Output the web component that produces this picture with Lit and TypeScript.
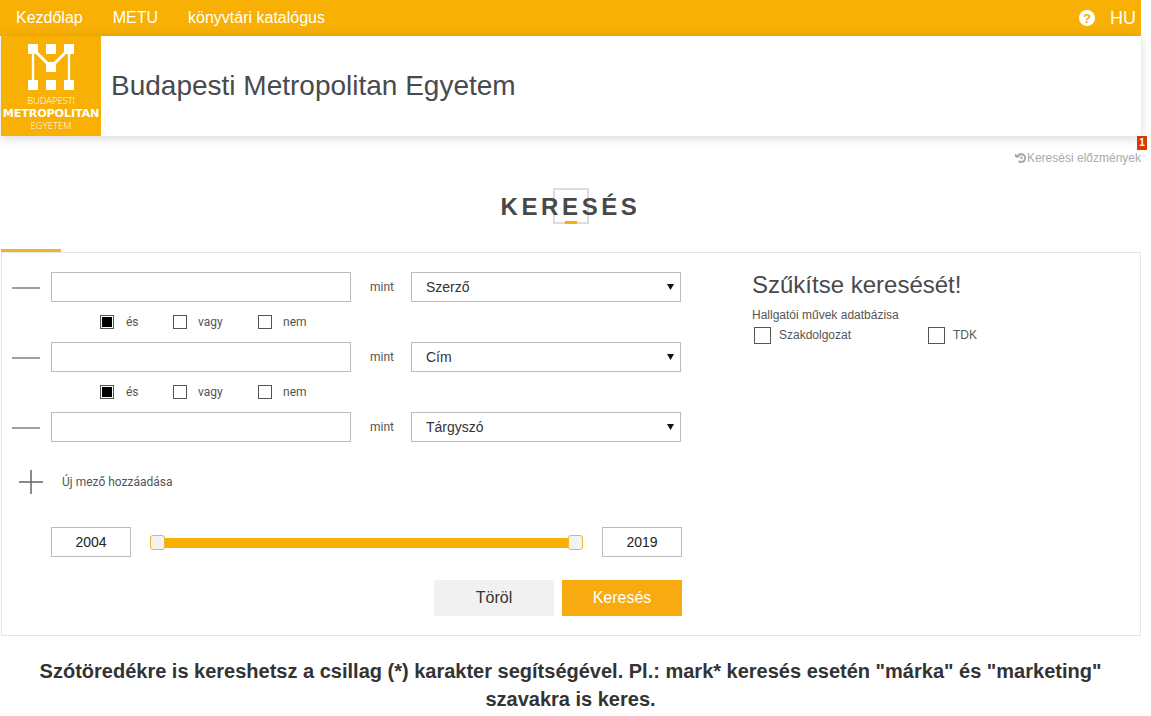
import { LitElement, html, css, svg } from "lit";
import { customElement } from "lit/decorators.js";

const logoMark = svg`<svg width="46" height="46" viewBox="0 0 46 46" class="mark">
  <g fill="#fff">
    <rect x="0" y="0" width="10" height="10"/><rect x="18" y="0" width="10" height="10"/><rect x="36" y="0" width="10" height="10"/>
    <rect x="18" y="18" width="10" height="10"/>
    <rect x="0" y="36" width="10" height="10"/><rect x="18" y="36" width="10" height="10"/><rect x="36" y="36" width="10" height="10"/>
  </g>
  <path d="M5 5V40M41 5V40" fill="none" stroke="#fff" stroke-width="2.4"/>
  <path d="M5 5 23 23 41 5" fill="none" stroke="#fff" stroke-width="3"/>
</svg>`;

@customElement("app-root")
export class AppRoot extends LitElement {
  static styles = css`
    :host { display: block; width: 1141px; background: #fff; font-family: "Liberation Sans", Arial, sans-serif; color: #444; }
    * { box-sizing: border-box; }
    .topbar { height: 36px; background: #f7b003; display: flex; align-items: center; color: #fff; font-size: 16px; padding: 0 5px 0 16px; }
    .topbar a { margin-right: 30px; }
    .spacer { flex: 1; }
    .help { width: 16px; height: 16px; border-radius: 50%; background: #fff; color: #f7b003; font-size: 13px; font-weight: 700; display: flex; align-items: center; justify-content: center; margin-right: 15px; }
    .lang { font-size: 18px; }
    .brand { height: 100px; margin-left: 1px; display: flex; align-items: center; box-shadow: 0 2px 10px rgba(0,0,0,.16); background: #fff; position: relative; }
    .logo { width: 100px; height: 100px; background: #f7b003; color: #fff; display: flex; flex-direction: column; align-items: center; padding-top: 8px; flex: none; }
    .logo .l1, .logo .l3 { font-size: 9.5px; line-height: 10px; font-family: "Open Sans", sans-serif; font-weight: 300; }
    .logo .l1 { margin-top: 6px; letter-spacing: -.1px; }
    .logo .l2 { font-size: 11.2px; line-height: 13px; font-weight: 700; font-family: "DejaVu Sans", sans-serif; letter-spacing: -.15px; margin-top: 1px; white-space: nowrap; }
    .logo .l3 { margin-top: 1px; }
    .brand h1 { font-size: 28px; font-weight: 400; margin: 0 0 0 10px; color: #484a4e; }
    .badge { position: absolute; right: -6px; bottom: -14px; width: 10px; height: 14px; background: #d83b01; color: #fff; font-size: 10px; font-weight: 700; text-align: center; line-height: 14px; }
    .history { display: flex; justify-content: flex-end; align-items: center; height: 14px; margin-top: 15px; font-size: 12px; color: #aaa; }
    .title-wrap { display: flex; justify-content: center; margin-top: 23px; height: 36px; }
    .title { position: relative; height: 36px; width: 140px; display: flex; align-items: center; justify-content: center; }
    .title .box { position: absolute; left: 52px; top: 0; width: 36px; height: 36px; border: 2px solid #ddd; }
    .title .bar { position: absolute; left: 64px; top: 33px; width: 12px; height: 3px; background: #f7b003; }
    .title h2 { position: relative; margin: 2px 0 0; font-size: 24px; font-weight: 700; letter-spacing: 3.6px; color: #48484a; white-space: nowrap; }
    .tab { width: 60px; height: 3px; margin: 25px 0 0 1px; background: #f0b429; }
    .panel { margin-left: 1px; height: 384px; border: 1px solid #e5e5e5; display: flex; padding: 19px 0 0 10px; }
    .form { width: 740px; flex: none; }
    .row { display: flex; align-items: center; height: 30px; }
    .dash { width: 28px; height: 2px; background: #a0a0a0; margin: 1px 11px 0 0; }
    input { font: 14px "Liberation Sans", Arial, sans-serif; color: #222; border: 1px solid #bbb; background: #fff; outline: none; border-radius: 0; }
    .text { width: 300px; height: 30px; }
    .mint { width: 60px; padding-left: 19px; font: 12px Roboto, sans-serif; color: #555; }
    .select { position: relative; width: 270px; height: 30px; }
    select { appearance: none; width: 100%; height: 100%; border: 1px solid #bbb; border-radius: 0; background: #fff; font: 14px "Liberation Sans", Arial, sans-serif; color: #333; padding-left: 14px; outline: none; }
    .arrow { position: absolute; right: 7px; top: 12px; pointer-events: none; }
    .checks { display: flex; align-items: center; height: 40px; padding-left: 88px; font: 12px Roboto, sans-serif; color: #555; }
    .check { display: flex; align-items: center; }
    .cb { width: 14px; height: 14px; border: 1px solid #555; background: #fff; flex: none; }
    .cb.on { padding: 1px; }
    .cb.on::before { content: ""; display: block; width: 100%; height: 100%; background: #000; }
    .check span { margin-left: 12px; }
    .c1 { width: 73px; }
    .c2 { width: 85px; }
    .check.c2 span { margin-left: 11px; }
    .add { display: flex; align-items: center; height: 24px; margin: 28px 0 0 7px; font: 12px Roboto, sans-serif; color: #555; }
    .add svg { margin-right: 19px; }
    .years { display: flex; align-items: center; height: 30px; margin: 33px 0 0 39px; width: 631px; }
    .year { width: 80px; height: 30px; text-align: center; }
    .slider { position: relative; flex: 1; height: 30px; }
    .track { position: absolute; left: 22px; right: 27px; top: 11px; height: 10px; background: #f7b003; }
    .handle { position: absolute; top: 8px; width: 15px; height: 15px; border: 1px solid #eab92e; border-radius: 3px; background: #f3f3f3; }
    .h1 { left: 19px; }
    .h2 { right: 19px; }
    .buttons { display: flex; justify-content: flex-end; gap: 8px; margin-top: 23px; width: 670px; }
    button { width: 120px; height: 36px; border: none; border-radius: 0; font: 16px "Liberation Sans", Arial, sans-serif; }
    .clear { background: #f1f1f1; color: #333; }
    .go { background: #f7ab10; color: #fff; }
    .aside h3 { margin: -1px 0 0; font-size: 24px; font-weight: 400; color: #484a4e; line-height: 28px; }
    .aside p { margin: 9px 0 0; font-size: 12px; line-height: 14px; color: #555; }
    .opts { display: flex; font-size: 12px; color: #555; margin: 5px 0 0 2px; }
    .opts .cb { width: 17px; height: 17px; }
    .opts .check { width: 174px; }
    .opts .check span { margin: -1px 0 0 8px; }
    .note { width: 1141px; padding: 0 20px; margin: 21px 0 0; text-align: center; font-size: 20px; line-height: 28px; font-weight: 700; color: #333; }
  `;

  private field(label: string) {
    return html`<div class="row">
      <div class="dash"></div>
      <input class="text" type="text" />
      <div class="mint">mint</div>
      <div class="select">
        <select><option>${label}</option></select>
        <svg class="arrow" width="7" height="6" viewBox="0 0 7 6"><path d="M0 0H7L3.5 6Z" fill="#111"/></svg>
      </div>
    </div>`;
  }

  private logic() {
    return html`<div class="checks">
      <div class="check c1"><div class="cb on"></div><span>és</span></div>
      <div class="check c2"><div class="cb"></div><span>vagy</span></div>
      <div class="check c2"><div class="cb"></div><span>nem</span></div>
    </div>`;
  }

  render() {
    return html`
      <div class="topbar">
        <a>Kezdőlap</a><a>METU</a><a>könyvtári katalógus</a>
        <div class="spacer"></div>
        <div class="help">?</div>
        <div class="lang">HU</div>
      </div>
      <div class="brand">
        <div class="logo">
          ${logoMark}
          <div class="l1">BUDAPESTI</div>
          <div class="l2">METROPOLITAN</div>
          <div class="l3">EGYETEM</div>
        </div>
        <h1>Budapesti Metropolitan Egyetem</h1>
        <div class="badge">1</div>
      </div>
      <div class="history">
        <svg width="12" height="12" viewBox="0 0 12 12"><path d="M2.2 6a4 4 0 1 1 1.3 3" fill="none" stroke="#aaa" stroke-width="2"/><path d="M0 1.5 5 5H0Z" fill="#aaa"/><path d="M6 3.5V6.3H8" fill="none" stroke="#aaa" stroke-width="1.2"/></svg>
        <span>Keresési előzmények</span>
      </div>
      <div class="title-wrap">
        <div class="title">
          <div class="box"></div>
          <div class="bar"></div>
          <h2>KERESÉS</h2>
        </div>
      </div>
      <div class="tab"></div>
      <div class="panel">
        <div class="form">
          ${this.field("Szerző")}
          ${this.logic()}
          ${this.field("Cím")}
          ${this.logic()}
          ${this.field("Tárgyszó")}
          <div class="add">
            <svg width="24" height="24" viewBox="0 0 24 24"><path d="M12 0V24M0 12H24" stroke="#666" stroke-width="1.5" fill="none"/></svg>
            <span>Új mező hozzáadása</span>
          </div>
          <div class="years">
            <input class="year" value="2004" />
            <div class="slider">
              <div class="track"></div>
              <div class="handle h1"></div>
              <div class="handle h2"></div>
            </div>
            <input class="year" value="2019" />
          </div>
          <div class="buttons">
            <button class="clear">Töröl</button>
            <button class="go">Keresés</button>
          </div>
        </div>
        <div class="aside">
          <h3>Szűkítse keresését!</h3>
          <p>Hallgatói művek adatbázisa</p>
          <div class="opts">
            <div class="check"><div class="cb"></div><span>Szakdolgozat</span></div>
            <div class="check"><div class="cb"></div><span>TDK</span></div>
          </div>
        </div>
      </div>
      <p class="note">Szótöredékre is kereshetsz a csillag (*) karakter segítségével. Pl.: mark* keresés esetén "márka" és "marketing" szavakra is keres.</p>
    `;
  }
}
